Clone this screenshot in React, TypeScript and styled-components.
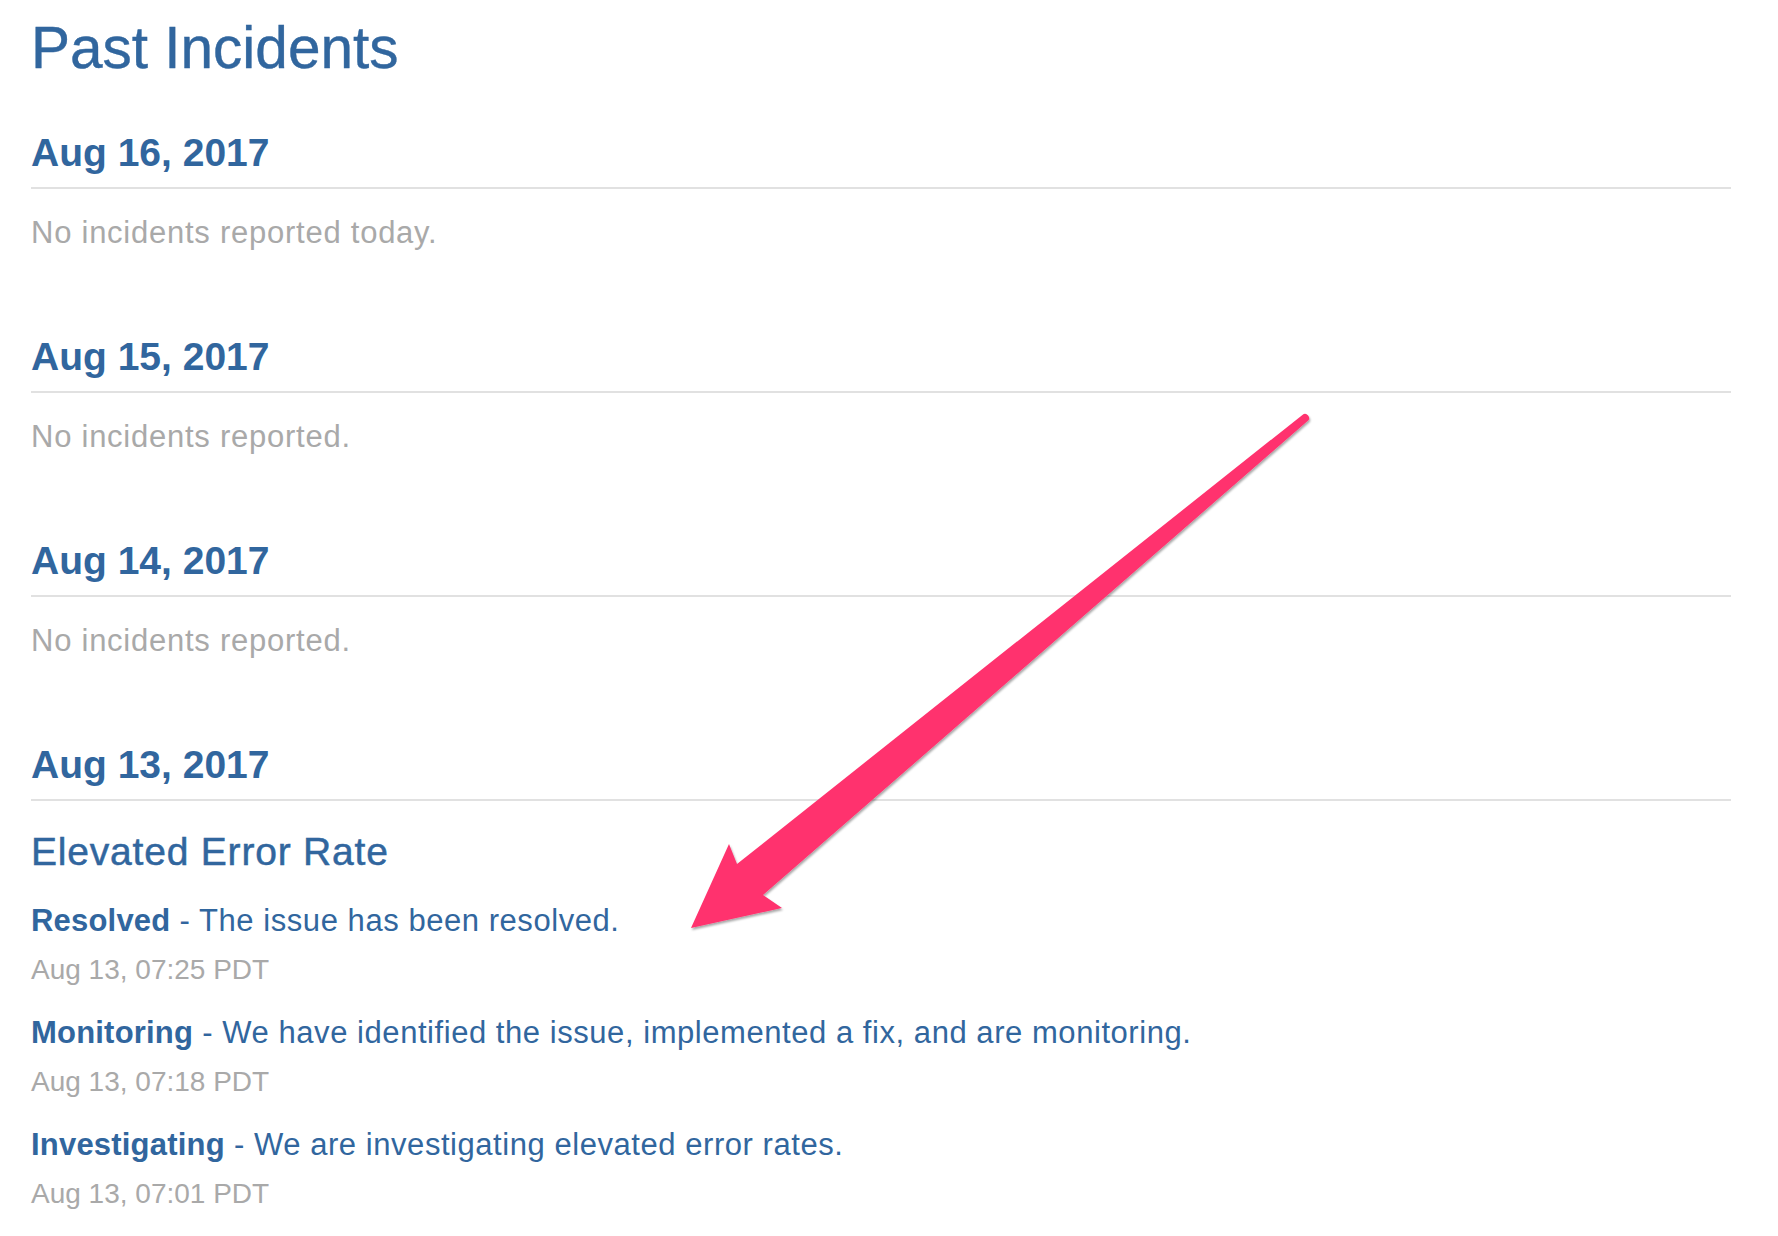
import React from "react";
import styled, { createGlobalStyle } from "styled-components";

const BLUE = "#31669e";
const GRAY = "#a9a9a9";

const GlobalStyle = createGlobalStyle`
  html, body {
    margin: 0;
    padding: 0;
    background: #ffffff;
  }
  body {
    font-family: "Liberation Sans", Arial, Helvetica, sans-serif;
    -webkit-font-smoothing: antialiased;
  }
  * { box-sizing: border-box; }
`;

const Page = styled.main`
  position: relative;
  padding: 16px 47px 0 31px;
  height: 1236px;
  overflow: hidden;
`;

const Title = styled.h1`
  margin: 0 0 51px;
  font-size: 58.5px;
  line-height: 64px;
  font-weight: 400;
  -webkit-text-stroke: 0.4px ${BLUE};
  color: ${BLUE};
`;

const DayList = styled.div`
  display: flex;
  flex-direction: column;
  gap: 82px;
`;

const DaySection = styled.section`
  display: flex;
  flex-direction: column;
`;

const DayHeader = styled.h2`
  margin: 0;
  padding-bottom: 12px;
  border-bottom: 2px solid #e1e1e1;
  font-size: 39px;
  line-height: 44px;
  font-weight: 700;
  color: ${BLUE};
`;

const NoIncidents = styled.p`
  margin: 24px 0 0;
  font-size: 31px;
  line-height: 40px;
  letter-spacing: 0.75px;
  color: ${GRAY};
`;

const IncidentTitle = styled.h3`
  margin: 29px 0 0;
  font-size: 39px;
  line-height: 44px;
  font-weight: 400;
  letter-spacing: 0.8px;
  -webkit-text-stroke: 0.5px ${BLUE};
  color: ${BLUE};
`;

const Update = styled.div`
  margin-top: 29px;
  display: flex;
  flex-direction: column;
  gap: 15px;
`;

const UpdateText = styled.p`
  margin: 0;
  font-size: 31px;
  line-height: 36px;
  letter-spacing: 0.55px;
  color: ${BLUE};
`;

const Status = styled.strong`
  font-weight: 700;
  letter-spacing: 0.2px;
`;

const UpdateTime = styled.p`
  margin: 0;
  font-size: 28px;
  line-height: 32px;
  color: ${GRAY};
`;

const ArrowLayer = styled.svg`
  position: absolute;
  left: 0;
  top: 0;
  width: 1778px;
  height: 1236px;
  pointer-events: none;
`;

type UpdateItem = { status: string; text: string; time: string };

const days: { date: string; empty?: string; incident?: { title: string; updates: UpdateItem[] } }[] = [
  { date: "Aug 16, 2017", empty: "No incidents reported today." },
  { date: "Aug 15, 2017", empty: "No incidents reported." },
  { date: "Aug 14, 2017", empty: "No incidents reported." },
  {
    date: "Aug 13, 2017",
    incident: {
      title: "Elevated Error Rate",
      updates: [
        { status: "Resolved", text: "The issue has been resolved.", time: "Aug 13, 07:25 PDT" },
        {
          status: "Monitoring",
          text: "We have identified the issue, implemented a fix, and are monitoring.",
          time: "Aug 13, 07:18 PDT",
        },
        { status: "Investigating", text: "We are investigating elevated error rates.", time: "Aug 13, 07:01 PDT" },
      ],
    },
  },
];

const Arrow = () => (
  <ArrowLayer viewBox="0 0 1778 1236">
    <defs>
      <filter id="arrowShadow" x="-10%" y="-10%" width="120%" height="120%">
        <feDropShadow dx="1" dy="2" stdDeviation="1.2" floodColor="#000" floodOpacity="0.35" />
      </filter>
    </defs>
    <path
      d="M691 928 L729 844 L737 864 L1302.4 414.9 A4 4 0 0 1 1307.6 421.1 L763 895 L782 908 Z"
      fill="#ff326e"
      filter="url(#arrowShadow)"
    />
  </ArrowLayer>
);

export default function App() {
  return (
    <>
      <GlobalStyle />
      <Page>
        <Title>Past Incidents</Title>
        <DayList>
          {days.map((d) => (
            <DaySection key={d.date}>
              <DayHeader>{d.date}</DayHeader>
              {d.empty && <NoIncidents>{d.empty}</NoIncidents>}
              {d.incident && (
                <>
                  <IncidentTitle>{d.incident.title}</IncidentTitle>
                  {d.incident.updates.map((u) => (
                    <Update key={u.status}>
                      <UpdateText>
                        <Status>{u.status}</Status> - {u.text}
                      </UpdateText>
                      <UpdateTime>{u.time}</UpdateTime>
                    </Update>
                  ))}
                </>
              )}
            </DaySection>
          ))}
        </DayList>
        <Arrow />
      </Page>
    </>
  );
}
